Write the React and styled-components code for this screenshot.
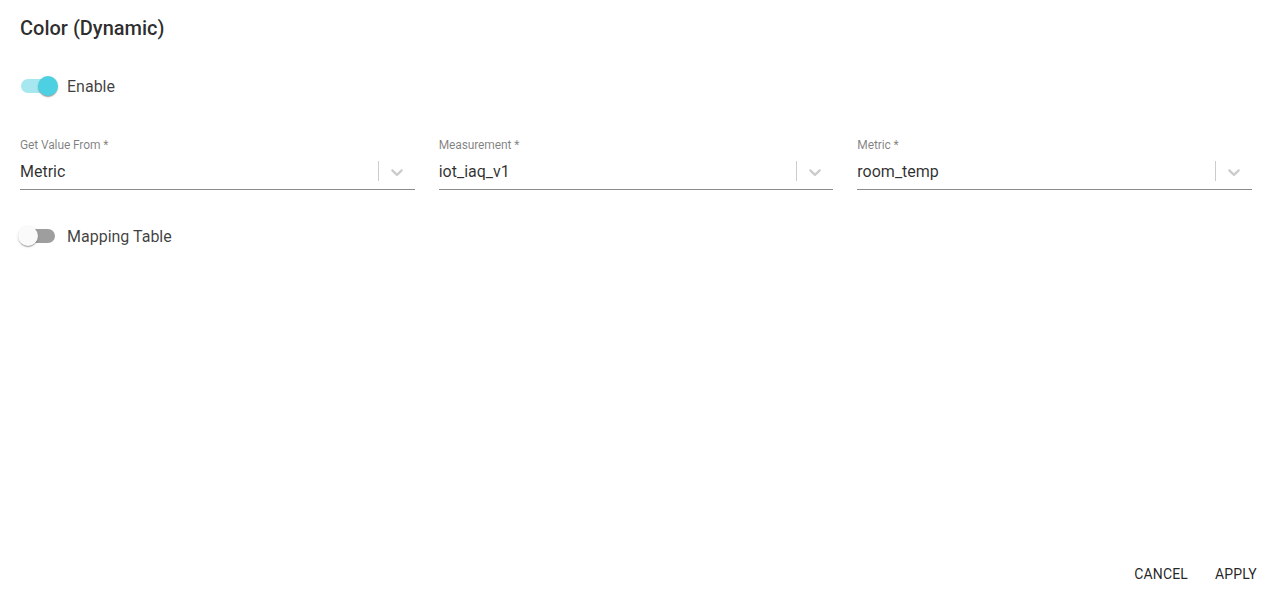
import * as React from "react";
import styled, { createGlobalStyle } from "styled-components";

const GlobalStyle = createGlobalStyle`
  html, body {
    margin: 0;
    padding: 0;
    background: #fff;
    font-family: Roboto, "Liberation Sans", sans-serif;
  }
  * {
    box-sizing: border-box;
  }
`;

const Page = styled.div`
  height: 100vh;
  display: flex;
  flex-direction: column;
`;

const Content = styled.div`
  flex: 1;
  padding: 12px 21px 0 20px;
`;

const Title = styled.h2`
  margin: 0;
  font-size: 20px;
  line-height: 32px;
  font-weight: 500;
  color: rgba(0, 0, 0, 0.84);
`;

const ToggleRow = styled.label`
  display: flex;
  align-items: center;
  margin-left: -11px;
  margin-top: ${props => props.top || 0}px;
  cursor: pointer;
`;

const SwitchRoot = styled.span`
  position: relative;
  display: inline-flex;
  width: 58px;
  height: 38px;
  padding: 12px;
  flex-shrink: 0;
`;

const Track = styled.span`
  width: 100%;
  height: 100%;
  border-radius: 7px;
  background: ${props => (props.on ? "#4dd0e1" : "#000")};
  opacity: ${props => (props.on ? 0.5 : 0.38)};
`;

const Thumb = styled.span`
  position: absolute;
  top: 9px;
  left: ${props => (props.on ? "29px" : "9px")};
  width: 20px;
  height: 20px;
  border-radius: 50%;
  background: ${props => (props.on ? "#4dd0e1" : "#fafafa")};
  box-shadow: 0px 2px 1px -1px rgba(0, 0, 0, 0.2),
    0px 1px 1px 0px rgba(0, 0, 0, 0.14), 0px 1px 3px 0px rgba(0, 0, 0, 0.12);
`;

const ToggleText = styled.span`
  font-size: 16px;
  color: rgba(0, 0, 0, 0.76);
`;

const Fields = styled.div`
  display: grid;
  grid-template-columns: repeat(3, 1fr);
  gap: 24px;
  margin-top: 33px;
`;

const Field = styled.div`
  display: flex;
  flex-direction: column;
`;

const FieldLabel = styled.label`
  font-size: 12px;
  line-height: 14px;
  color: rgba(0, 0, 0, 0.5);
  letter-spacing: -0.01em;
`;

const Control = styled.div`
  display: flex;
  align-items: center;
  height: 38px;
  padding-top: 2px;
  border-bottom: 1px solid rgba(0, 0, 0, 0.45);
`;

const Value = styled.div`
  flex: 1;
  font-size: 16px;
  color: rgba(0, 0, 0, 0.82);
`;

const Separator = styled.span`
  align-self: stretch;
  width: 1px;
  margin: 7px 0 8px;
  background: #cccccc;
`;

const Indicator = styled.span`
  display: flex;
  padding: 8px;
  color: #cccccc;
`;

const Footer = styled.div`
  display: flex;
  justify-content: flex-end;
  gap: 8px;
  padding: 0 5px 5px;
`;

const Button = styled.button`
  min-width: 64px;
  height: 36px;
  padding: 6px 8px;
  border: none;
  background: transparent;
  font-family: Roboto, "Liberation Sans", sans-serif;
  font-size: 14px;
  font-weight: 400;
  letter-spacing: 0.01em;
  text-transform: uppercase;
  color: rgba(0, 0, 0, 0.87);
  cursor: pointer;
`;

const Chevron = () => (
  <svg width="20" height="20" viewBox="0 0 20 20" fill="currentColor" aria-hidden="true">
    <path d="M4.516 7.548c0.436-0.446 1.043-0.481 1.576 0l3.908 3.747 3.908-3.747c0.533-0.481 1.141-0.446 1.574 0 0.436 0.445 0.408 1.197 0 1.615-0.406 0.418-4.695 4.502-4.695 4.502-0.217 0.223-0.502 0.335-0.787 0.335s-0.57-0.112-0.789-0.335c0 0-4.287-4.084-4.695-4.502s-0.436-1.17 0-1.615z" />
  </svg>
);

const Toggle = ({ on, label, top }) => (
  <ToggleRow top={top}>
    <SwitchRoot>
      <Track on={on ? 1 : 0} />
      <Thumb on={on ? 1 : 0} />
    </SwitchRoot>
    <ToggleText>{label}</ToggleText>
  </ToggleRow>
);

const SelectField = ({ label, value }) => (
  <Field>
    <FieldLabel>{label} *</FieldLabel>
    <Control>
      <Value>{value}</Value>
      <Separator />
      <Indicator>
        <Chevron />
      </Indicator>
    </Control>
  </Field>
);

const App = () => {
  return (
    <Page>
      <GlobalStyle />
      <Content>
        <Title>Color (Dynamic)</Title>
        <Toggle on label="Enable" top={23} />
        <Fields>
          <SelectField label="Get Value From" value="Metric" />
          <SelectField label="Measurement" value="iot_iaq_v1" />
          <SelectField label="Metric" value="room_temp" />
        </Fields>
        <Toggle label="Mapping Table" top={27} />
      </Content>
      <Footer>
        <Button>Cancel</Button>
        <Button>Apply</Button>
      </Footer>
    </Page>
  );
};

export default App;
